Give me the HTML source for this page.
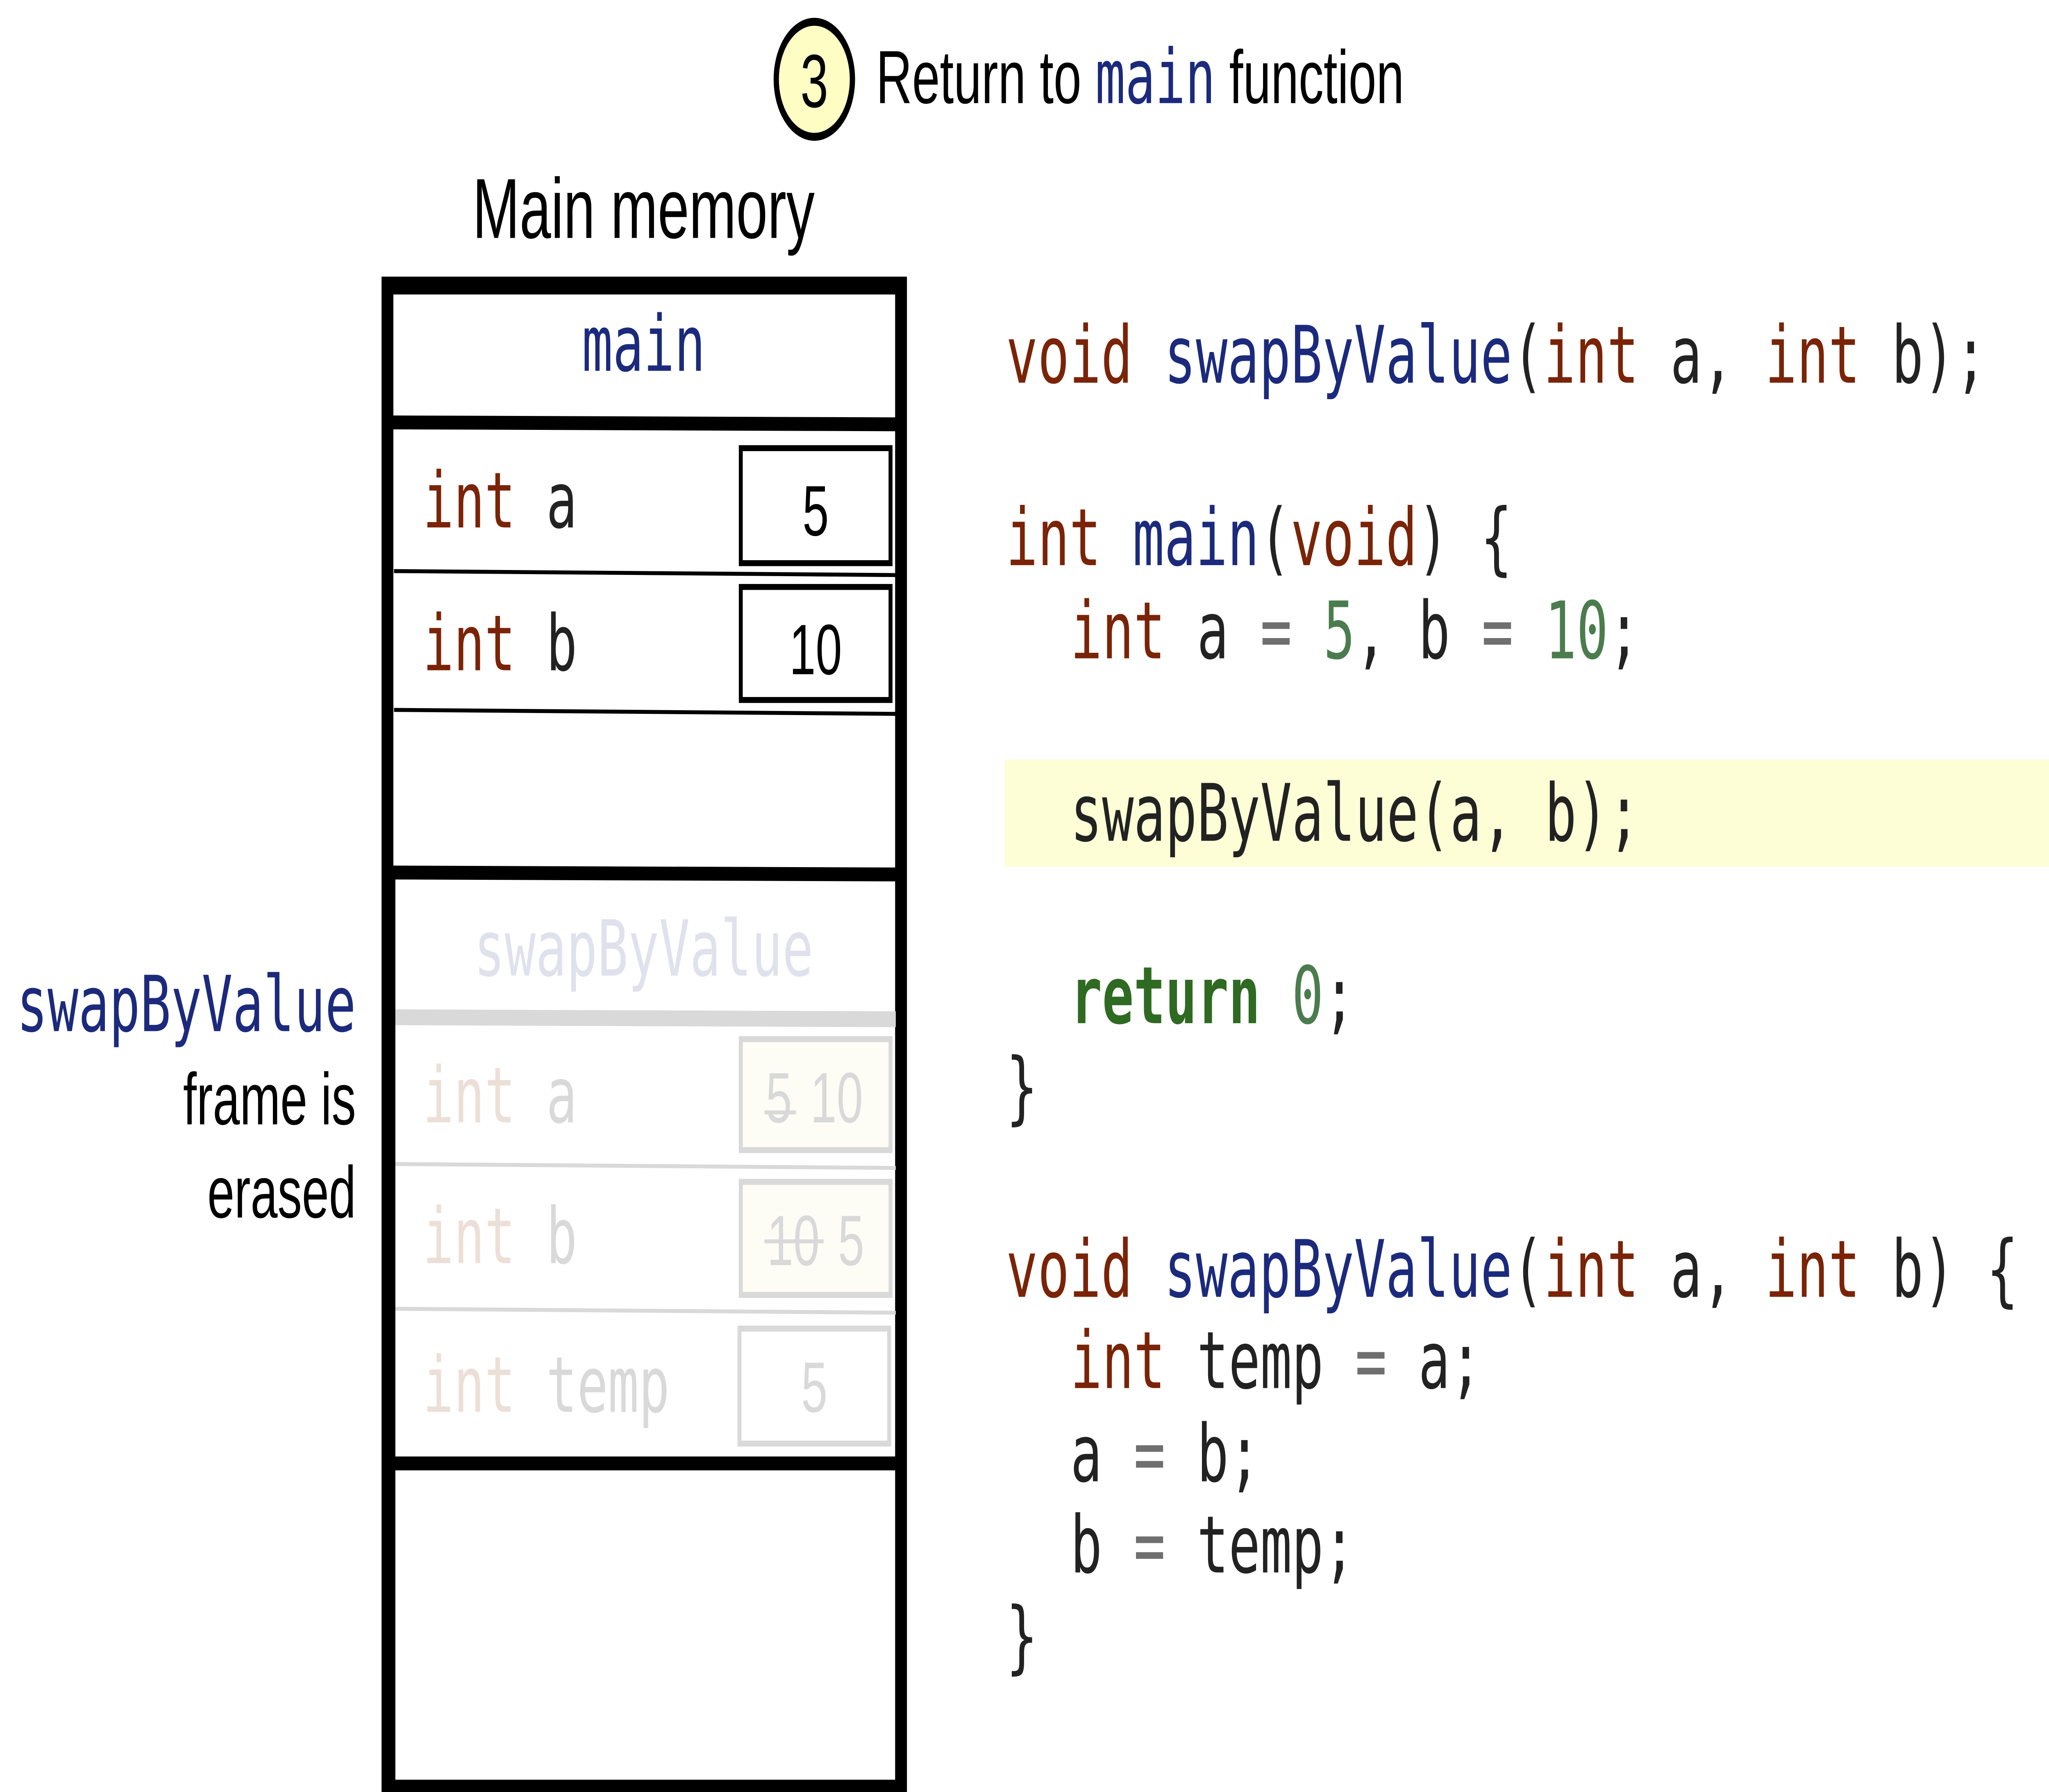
<!DOCTYPE html>
<html><head><meta charset="utf-8"><style>
html,body{margin:0;padding:0;background:#fff;overflow:hidden;width:100vw;height:100vh;}
svg{display:block;width:100vw;height:100vh;}
.m{font-family:"DejaVu Sans Mono","Liberation Mono",monospace;white-space:pre;}
.s{font-family:"Liberation Sans",sans-serif;}
</style></head><body>
<svg viewBox="0 0 1560 903.7" preserveAspectRatio="none" xmlns="http://www.w3.org/2000/svg">
<rect width="1560" height="904" fill="#fff"/>
<circle cx="620" cy="40" r="29" fill="#fdfdc4" stroke="#000" stroke-width="4"/>
<text x="620" y="54" class="s" font-size="38" text-anchor="middle">3</text>
<text x="667" y="52" class="s" font-size="38">Return to <tspan class="m" fill="#1b2a7c" font-size="38">main</tspan> function</text>
<text x="490" y="120" class="s" font-size="43" text-anchor="middle">Main memory</text>

<rect x="295" y="144" width="391" height="758" fill="none" stroke="#000" stroke-width="9"/>
<text x="490" y="187" class="m" font-size="39" text-anchor="middle" fill="#1b2a7c">main</text>
<line x1="292" y1="213" x2="690" y2="214" stroke="#000" stroke-width="7"/>
<text x="322" y="266" class="m" font-size="39"><tspan fill="#7a2306">int</tspan> <tspan fill="#222">a</tspan></text>
<rect x="564" y="226" width="114" height="58" fill="#fff" stroke="#000" stroke-width="3"/>
<text x="621" y="270" class="s" font-size="36" text-anchor="middle">5</text>
<line x1="300" y1="288" x2="682" y2="290" stroke="#000" stroke-width="2"/>
<text x="322" y="338" class="m" font-size="39"><tspan fill="#7a2306">int</tspan> <tspan fill="#222">b</tspan></text>
<rect x="564" y="296" width="114" height="57" fill="#fff" stroke="#000" stroke-width="3"/>
<text x="621" y="340" class="s" font-size="36" text-anchor="middle">10</text>
<line x1="300" y1="358" x2="682" y2="360" stroke="#000" stroke-width="2"/>
<line x1="292" y1="440" x2="690" y2="441" stroke="#000" stroke-width="7"/>

<text x="490" y="492" class="m" font-size="39" text-anchor="middle" fill="#dfe1ec">swapByValue</text>
<line x1="300" y1="513" x2="682" y2="514" stroke="#d9d9d9" stroke-width="8"/>
<text x="322" y="566" class="m" font-size="39"><tspan fill="#ecdfd7">int</tspan> <tspan fill="#d9d9d9">a</tspan></text>
<rect x="564" y="524" width="114" height="56" fill="#fdfdf6" stroke="#d9d9d9" stroke-width="3"/>
<text x="593" y="566" class="s" font-size="36" text-anchor="middle" fill="#d9d9d9">5</text>
<line x1="582" y1="561" x2="606" y2="561" stroke="#d9d9d9" stroke-width="2"/>
<text x="637" y="566" class="s" font-size="36" text-anchor="middle" fill="#d9d9d9">10</text>
<line x1="300" y1="587" x2="682" y2="589" stroke="#d9d9d9" stroke-width="2"/>
<text x="322" y="637" class="m" font-size="39"><tspan fill="#ecdfd7">int</tspan> <tspan fill="#d9d9d9">b</tspan></text>
<rect x="564" y="596" width="114" height="57" fill="#fdfdf6" stroke="#d9d9d9" stroke-width="3"/>
<text x="604" y="638" class="s" font-size="36" text-anchor="middle" fill="#d9d9d9">10</text>
<line x1="582" y1="626" x2="627" y2="626" stroke="#d9d9d9" stroke-width="2"/>
<text x="648" y="638" class="s" font-size="36" text-anchor="middle" fill="#d9d9d9">5</text>
<line x1="300" y1="660" x2="682" y2="662" stroke="#d9d9d9" stroke-width="2"/>
<text x="322" y="712" class="m" font-size="39"><tspan fill="#ecdfd7">int</tspan> <tspan fill="#d9d9d9">temp</tspan></text>
<rect x="563" y="670" width="114" height="58" fill="#fff" stroke="#d9d9d9" stroke-width="3"/>
<text x="620" y="712" class="s" font-size="36" text-anchor="middle" fill="#d9d9d9">5</text>
<line x1="292" y1="738" x2="690" y2="738" stroke="#000" stroke-width="7"/>
<line x1="298" y1="440" x2="298" y2="902" stroke="#000" stroke-width="6"/>

<text x="271" y="520" class="m" font-size="39" text-anchor="end" fill="#1b2a7c">swapByValue</text>
<text x="271" y="567" class="s" font-size="37" text-anchor="end">frame is</text>
<text x="271" y="614" class="s" font-size="37" text-anchor="end">erased</text>

<rect x="765" y="383" width="795" height="54" fill="#fdfdd6"/>
<g class="m" font-size="40" fill="#222">
<text x="766" y="193"><tspan fill="#7a2306">void</tspan> <tspan fill="#1b2a7c">swapByValue</tspan>(<tspan fill="#7a2306">int</tspan> a, <tspan fill="#7a2306">int</tspan> b);</text>
<text x="766" y="285"><tspan fill="#7a2306">int</tspan> <tspan fill="#1b2a7c">main</tspan>(<tspan fill="#7a2306">void</tspan>) {</text>
<text x="815" y="332"><tspan fill="#7a2306">int</tspan> a <tspan fill="#6f6f6f">=</tspan> <tspan fill="#4a7c4e">5</tspan>, b <tspan fill="#6f6f6f">=</tspan> <tspan fill="#4a7c4e">10</tspan>;</text>
<text x="815" y="424">swapByValue(a, b);</text>
<text x="815" y="516"><tspan fill="#2f6a22" font-weight="bold">return</tspan> <tspan fill="#4a7c4e">0</tspan>;</text>
<text x="766" y="562">}</text>
<text x="766" y="654"><tspan fill="#7a2306">void</tspan> <tspan fill="#1b2a7c">swapByValue</tspan>(<tspan fill="#7a2306">int</tspan> a, <tspan fill="#7a2306">int</tspan> b) {</text>
<text x="815" y="700"><tspan fill="#7a2306">int</tspan> temp <tspan fill="#6f6f6f">=</tspan> a;</text>
<text x="815" y="747">a <tspan fill="#6f6f6f">=</tspan> b;</text>
<text x="815" y="793">b <tspan fill="#6f6f6f">=</tspan> temp;</text>
<text x="766" y="839">}</text>
</g>
</svg>
</body></html>
